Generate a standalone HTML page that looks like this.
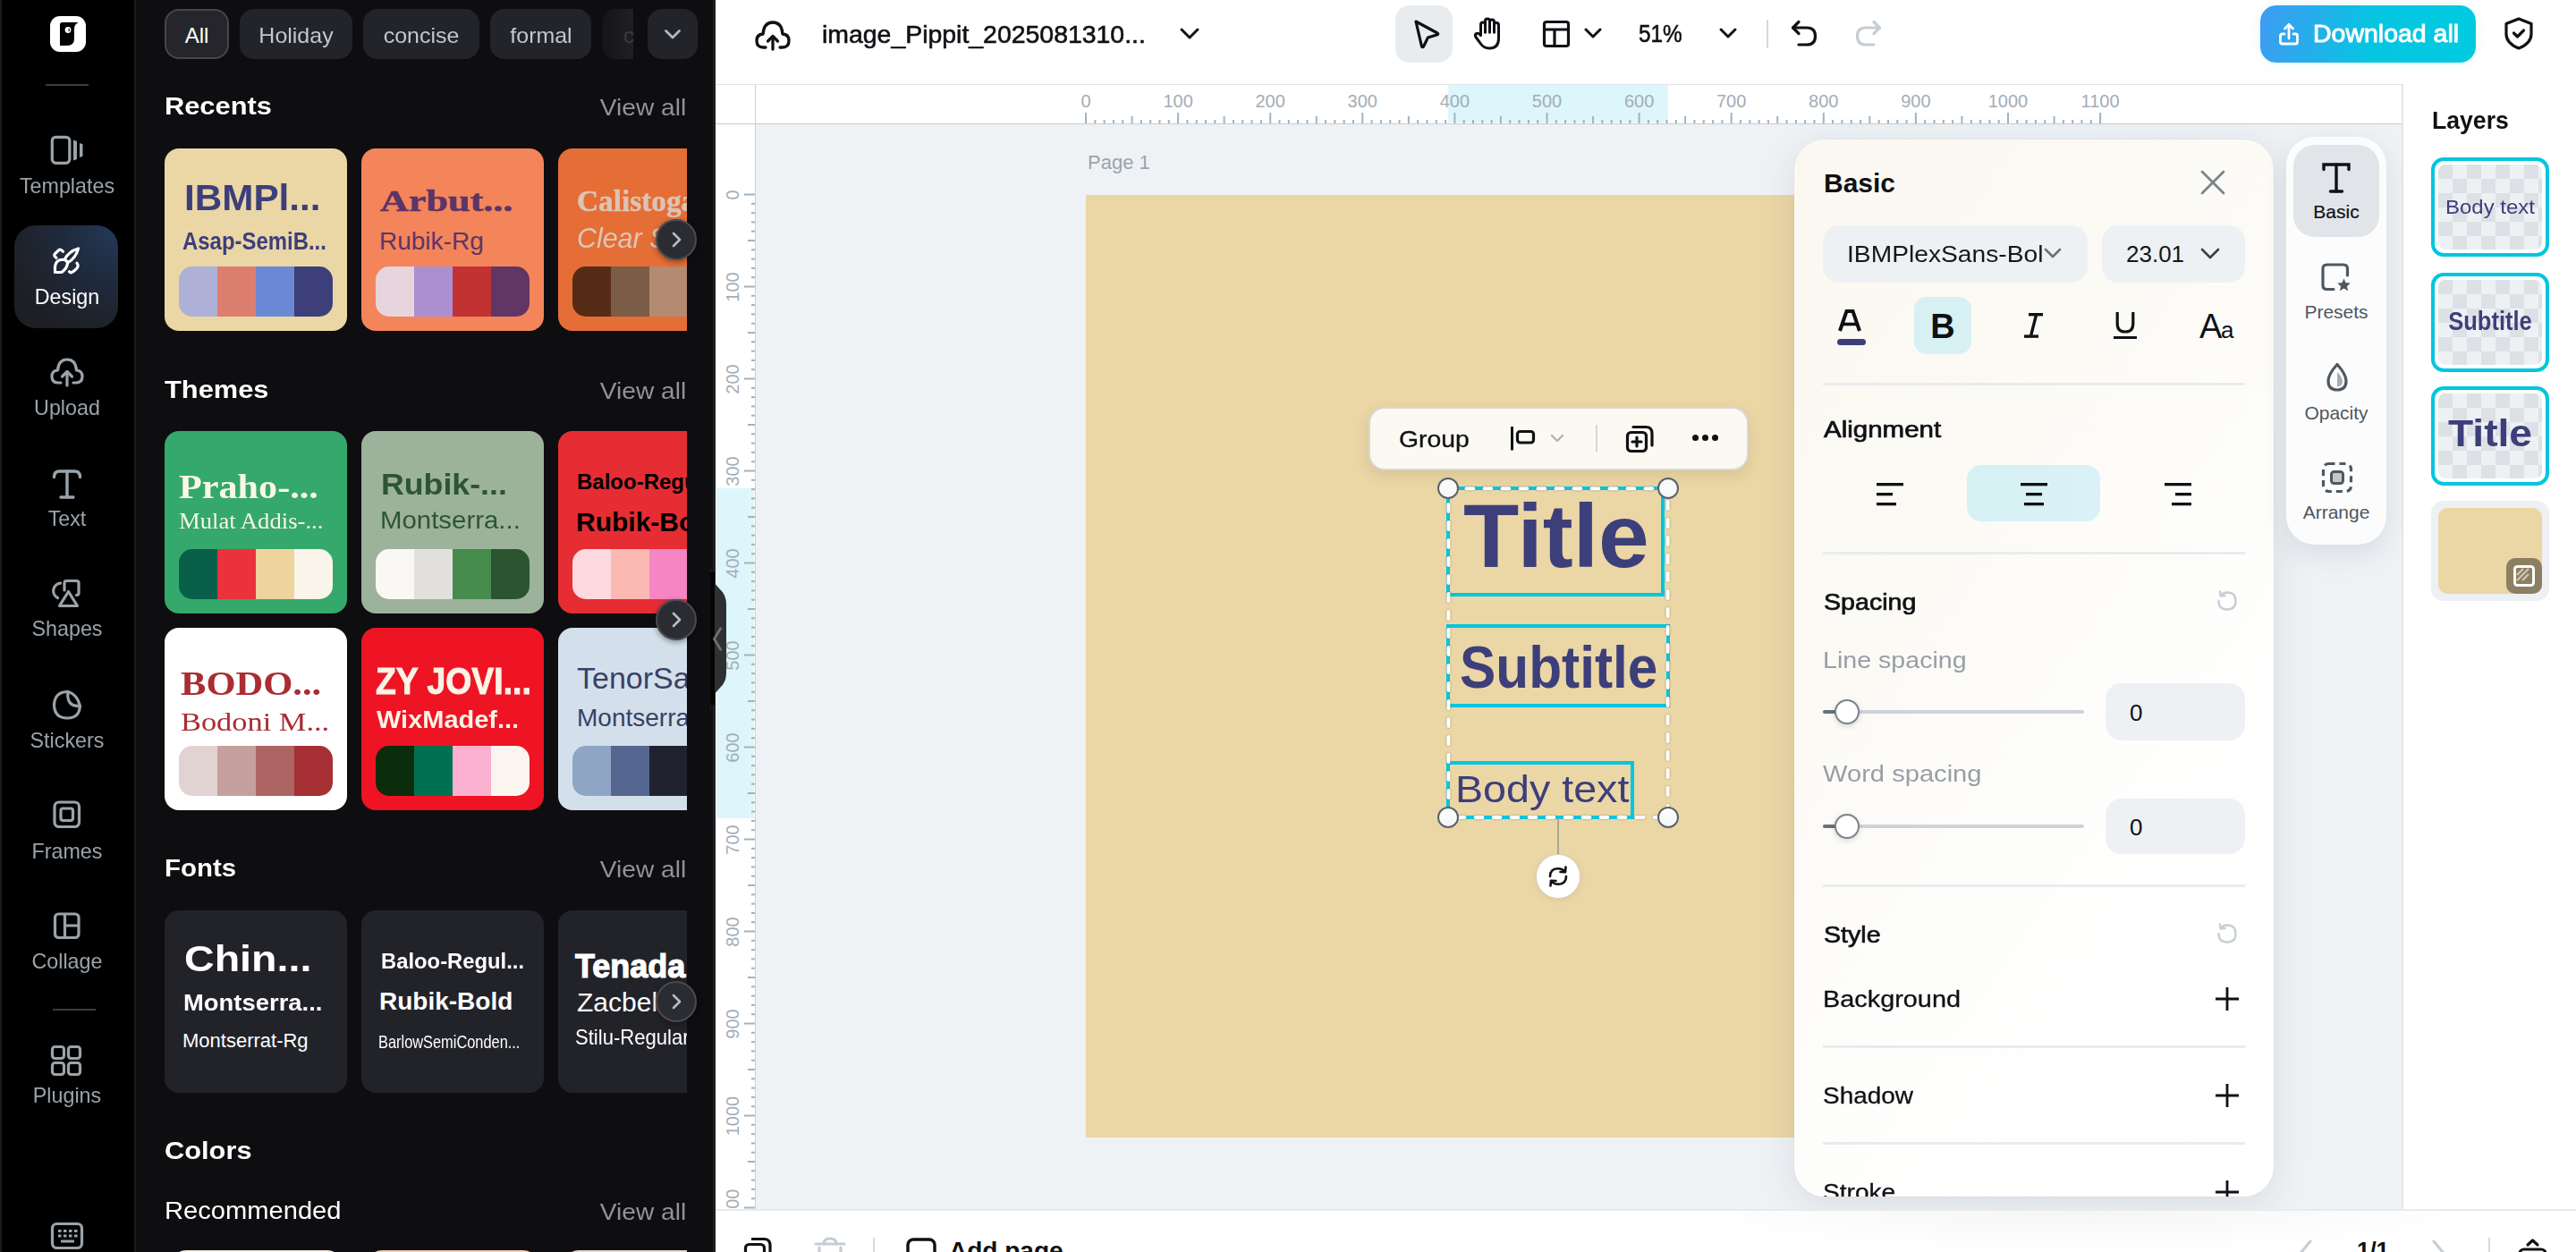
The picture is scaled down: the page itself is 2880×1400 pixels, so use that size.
<!DOCTYPE html>
<html><head><meta charset="utf-8"><style>
html,body{margin:0;padding:0;width:2880px;height:1400px;overflow:hidden;background:#eef2f5;}
body{position:relative;font-family:"Liberation Sans", sans-serif;}
.t{position:absolute;white-space:nowrap;}
.b{position:absolute;box-sizing:border-box;}
svg.b{overflow:visible;}
</style></head><body>
<div class="b" style="left:0px;top:0px;width:150px;height:1400px;background:#000;border-radius:0px;"></div>
<div class="b" style="left:150px;top:0px;width:650px;height:1400px;background:#0e0e11;border-radius:0px;border-left:2px solid #1c1c1f;"></div>
<div class="b" style="left:800px;top:0px;width:2080px;height:95px;background:#fff;border-radius:0px;border-bottom:1px solid #dfe4e8;"></div>
<div class="b" style="left:800px;top:95px;width:1885px;height:44px;background:#fff;border-radius:0px;border-bottom:1px solid #c6ced6;"></div>
<div class="b" style="left:800px;top:95px;width:45px;height:1258px;background:#fff;border-radius:0px;border-right:1px solid #c9d1d9;"></div>
<div class="b" style="left:800px;top:138px;width:45px;height:1px;background:#c6ced6;border-radius:0px;"></div>
<div class="b" style="left:797px;top:0px;width:3px;height:1400px;background:#1f1f21;border-radius:0px;"></div>
<div class="b" style="left:2685px;top:94px;width:195px;height:1259px;background:#fff;border-radius:0px;border-left:2px solid #e3e7ea;"></div>
<div class="b" style="left:800px;top:1352px;width:2080px;height:48px;background:#fff;border-radius:0px;border-top:2px solid #e8ebee;"></div>
<div class="t" style="top:171.38px;font-size:22px;line-height:22px;color:#9aa4ae;font-weight:400;font-family:'Liberation Sans', sans-serif;left:1216px;">Page 1</div>
<div class="b" style="left:1214px;top:218px;width:800px;height:1054px;background:#ebd6a6;border-radius:0px;"></div>
<div class="b" style="left:0px;top:0px;width:2px;height:1400px;background:#1a1a1c;border-radius:0px;"></div>
<div class="b" style="left:56px;top:18px;width:40px;height:40px;background:#fff;border-radius:11px;"></div>
<svg class="b" style="left:56px;top:18px;" width="40" height="40" viewBox="0 0 40 40" fill="none"><path d="M11 9.5 Q11 7 13.5 7 L31.5 7 Q27 9.5 27 14 L27 25 Q27 33 19 33 L11 33 Z" fill="#000"/><circle cx="20" cy="15.5" r="3.4" fill="#fff"/><path d="M20.6 13.6 a2 2 0 0 1 0 3.8 z" fill="#000"/></svg>
<div class="b" style="left:51px;top:94px;width:48px;height:2px;background:#3a3b3e;border-radius:0px;"></div>
<svg class="b" style="left:55px;top:150px;" width="40" height="36" viewBox="0 0 40 36" fill="none"><rect x="3.3" y="3.3" width="19.5" height="29" rx="4" stroke="#9ba3aa" stroke-width="3.2"/><path d="M27 6.5 L31 8 L31 28 L27 29.5 Z" fill="#9ba3aa"/><path d="M34 10 L37.5 11.2 L37.5 24.8 L34 26 Z" fill="#9ba3aa"/></svg>
<div class="t" style="top:195.68px;font-size:24px;line-height:24px;color:#9ba3aa;font-weight:400;font-family:'Liberation Sans', sans-serif;left:-525px;width:1200px;text-align:center;transform:scaleX(0.97);transform-origin:center center;">Templates</div>
<div class="b" style="left:16px;top:252px;width:116px;height:115px;background:radial-gradient(130px 130px at 100% 0%,#24395a 0%,#1f2a3b 50%,#1e1f25 100%);border-radius:24px;"></div>
<svg class="b" style="left:59px;top:276px;" width="30" height="31" viewBox="0 0 30 31" fill="none"><g stroke="#fff" stroke-width="3.2" stroke-linecap="round" stroke-linejoin="round"><path d="M4 12.3 L2 10.3 Q1.2 9.2 2.2 8 L6.5 3.8 Q8 2.6 9.5 3.6 L11.5 5.3"/><path d="M13 14.3 Q18 5 28.5 2 Q26 12.5 16.5 17.8"/><path d="M13 14.5 Q16.5 15.5 16.5 18.5 Q15.8 24 10 28.5 L2.5 28.5 L2.5 22 Q3.5 15 9.5 14.3 Z"/><path d="M27 18.2 Q28.5 20 28 22 Q27 25 21.5 28.5 Q19.7 29.3 18.5 27.8"/></g></svg>
<div class="t" style="top:319.68px;font-size:24px;line-height:24px;color:#fff;font-weight:400;font-family:'Liberation Sans', sans-serif;left:-525px;width:1200px;text-align:center;transform:scaleX(0.97);transform-origin:center center;">Design</div>
<svg class="b" style="left:55px;top:398px;" width="40" height="36" viewBox="0 0 40 36" fill="none"><g stroke="#9ba3aa" stroke-width="3.2" stroke-linecap="round" stroke-linejoin="round"><path d="M13 30 L10 30 Q3 30 3 23 Q3 16.5 9.5 16 Q10.5 4 20 4 Q29.5 4 30.5 16 Q37 16.5 37 23 Q37 30 30 30 L27 30"/><path d="M20 33 L20 18"/><path d="M14.5 23 L20 17.5 L25.5 23"/></g></svg>
<div class="t" style="top:443.68px;font-size:24px;line-height:24px;color:#9ba3aa;font-weight:400;font-family:'Liberation Sans', sans-serif;left:-525px;width:1200px;text-align:center;transform:scaleX(0.97);transform-origin:center center;">Upload</div>
<svg class="b" style="left:55px;top:523px;" width="40" height="36" viewBox="0 0 40 36" fill="none"><g stroke="#9ba3aa" stroke-width="3.4" stroke-linecap="round" fill="none"><path d="M5.5 10.5 Q5.5 4 11.5 4 L28.5 4 Q34.5 4 34.5 10.5"/><path d="M20 4 L20 33"/><path d="M13 33 L27 33"/></g></svg>
<div class="t" style="top:567.68px;font-size:24px;line-height:24px;color:#9ba3aa;font-weight:400;font-family:'Liberation Sans', sans-serif;left:-525px;width:1200px;text-align:center;transform:scaleX(0.97);transform-origin:center center;">Text</div>
<svg class="b" style="left:55px;top:646px;" width="40" height="36" viewBox="0 0 40 36" fill="none"><g stroke="#9ba3aa" stroke-width="3.2" stroke-linejoin="round" stroke-linecap="round"><path d="M12.5 6.2 A8.6 8.6 0 0 0 9.5 22.5"/><path d="M17 14 L17 6 Q17 3.5 19.5 3.5 L30.5 3.5 Q33 3.5 33 6 L33 17 Q33 19.5 30.5 19.5"/><path d="M21.5 15.5 L31.5 31.5 L11.5 31.5 Z"/></g></svg>
<div class="t" style="top:690.68px;font-size:24px;line-height:24px;color:#9ba3aa;font-weight:400;font-family:'Liberation Sans', sans-serif;left:-525px;width:1200px;text-align:center;transform:scaleX(0.97);transform-origin:center center;">Shapes</div>
<svg class="b" style="left:55px;top:770px;" width="40" height="36" viewBox="0 0 40 36" fill="none"><g stroke="#9ba3aa" stroke-width="3.2" stroke-linejoin="round" stroke-linecap="round"><path d="M21 3.5 Q6 3.5 5.5 18.5 Q6 33 20.5 33 Q33.5 33 34.5 19.5 Q25 20 22 14 Q20 9 21 3.5 Z"/><path d="M21 3.5 Q31 6 34.5 19.5"/></g></svg>
<div class="t" style="top:815.68px;font-size:24px;line-height:24px;color:#9ba3aa;font-weight:400;font-family:'Liberation Sans', sans-serif;left:-525px;width:1200px;text-align:center;transform:scaleX(0.97);transform-origin:center center;">Stickers</div>
<svg class="b" style="left:55px;top:894px;" width="40" height="36" viewBox="0 0 40 36" fill="none"><g stroke="#9ba3aa" stroke-width="3.2"><rect x="6" y="3" width="27.5" height="27.5" rx="5"/><rect x="13" y="10" width="13.5" height="13.5" rx="2.5"/></g></svg>
<div class="t" style="top:939.68px;font-size:24px;line-height:24px;color:#9ba3aa;font-weight:400;font-family:'Liberation Sans', sans-serif;left:-525px;width:1200px;text-align:center;transform:scaleX(0.97);transform-origin:center center;">Frames</div>
<svg class="b" style="left:55px;top:1019px;" width="40" height="36" viewBox="0 0 40 36" fill="none"><g stroke="#9ba3aa" stroke-width="3.2"><rect x="6.5" y="3" width="26.5" height="26.5" rx="4"/><path d="M17.5 3 L17.5 29.5 M17.5 16 L33 16"/></g></svg>
<div class="t" style="top:1062.68px;font-size:24px;line-height:24px;color:#9ba3aa;font-weight:400;font-family:'Liberation Sans', sans-serif;left:-525px;width:1200px;text-align:center;transform:scaleX(0.97);transform-origin:center center;">Collage</div>
<div class="b" style="left:59px;top:1128px;width:48px;height:2px;background:#3a3b3e;border-radius:0px;"></div>
<svg class="b" style="left:55px;top:1167px;" width="40" height="38" viewBox="0 0 40 38" fill="none"><g stroke="#9ba3aa" stroke-width="3.2"><rect x="3.5" y="3.5" width="13" height="13" rx="3"/><rect x="21.5" y="3.5" width="13" height="13" rx="3"/><rect x="3.5" y="21.5" width="13" height="13" rx="3"/><rect x="21.5" y="21.5" width="13" height="13" rx="3"/></g></svg>
<div class="t" style="top:1212.68px;font-size:24px;line-height:24px;color:#9ba3aa;font-weight:400;font-family:'Liberation Sans', sans-serif;left:-525px;width:1200px;text-align:center;transform:scaleX(0.97);transform-origin:center center;">Plugins</div>
<svg class="b" style="left:55px;top:1365px;" width="40" height="34" viewBox="0 0 40 34" fill="none"><rect x="3.5" y="3.5" width="33" height="27" rx="5" stroke="#9ba3aa" stroke-width="3.2"/><g fill="#9ba3aa"><rect x="10" y="10" width="3.5" height="3" /><rect x="16" y="10" width="3.5" height="3"/><rect x="22" y="10" width="3.5" height="3"/><rect x="28" y="10" width="3.5" height="3"/><rect x="10" y="15.5" width="3.5" height="3"/><rect x="16" y="15.5" width="3.5" height="3"/><rect x="22" y="15.5" width="3.5" height="3"/><rect x="28" y="15.5" width="3.5" height="3"/><rect x="13" y="21.5" width="15" height="3"/></g></svg>
<div class="b" style="left:184px;top:10px;width:72px;height:56px;background:#25262b;border-radius:16px;border:2px solid #46474c;"></div>
<div class="t" style="top:27.68px;font-size:24px;line-height:24px;color:#fff;font-weight:400;font-family:'Liberation Sans', sans-serif;left:-380px;width:1200px;text-align:center;">All</div>
<div class="b" style="left:268px;top:10px;width:126px;height:56px;background:#232429;border-radius:16px;"></div>
<div class="t" style="top:27.68px;font-size:24px;line-height:24px;color:#c3c6cb;font-weight:400;font-family:'Liberation Sans', sans-serif;left:-269.0px;width:1200px;text-align:center;transform:scaleX(1.04);transform-origin:center center;">Holiday</div>
<div class="b" style="left:406px;top:10px;width:130px;height:56px;background:#232429;border-radius:16px;"></div>
<div class="t" style="top:27.68px;font-size:24px;line-height:24px;color:#c3c6cb;font-weight:400;font-family:'Liberation Sans', sans-serif;left:-129.0px;width:1200px;text-align:center;transform:scaleX(1.04);transform-origin:center center;">concise</div>
<div class="b" style="left:548px;top:10px;width:113px;height:56px;background:#232429;border-radius:16px;"></div>
<div class="t" style="top:27.68px;font-size:24px;line-height:24px;color:#c3c6cb;font-weight:400;font-family:'Liberation Sans', sans-serif;left:4.5px;width:1200px;text-align:center;transform:scaleX(1.04);transform-origin:center center;">formal</div>
<div class="b" style="left:673px;top:10px;width:35px;height:56px;background:linear-gradient(90deg,#151518 0%,#1f2024 100%);border-radius:0px;border-radius:16px 0 0 16px;"></div>
<div class="t" style="top:27.68px;font-size:24px;line-height:24px;color:#3a3b40;font-weight:400;font-family:'Liberation Sans', sans-serif;left:697px;">c</div>
<div class="b" style="left:724px;top:10px;width:56px;height:56px;background:#232429;border-radius:16px;"></div>
<svg class="b" style="left:738px;top:28px;" width="28" height="20" viewBox="0 0 28 20" fill="none"><path d="M6.5 6.5 L14 14 L21.5 6.5" stroke="#b3b6bc" stroke-width="2.8" stroke-linecap="round" stroke-linejoin="round"/></svg>
<div class="t" style="top:105.30px;font-size:28px;line-height:28px;color:#fff;font-weight:700;font-family:'Liberation Sans', sans-serif;left:184px;transform:scaleX(1.1);transform-origin:left center;">Recents</div>
<div class="t" style="top:106.99px;font-size:26px;line-height:26px;color:#909399;font-weight:400;font-family:'Liberation Sans', sans-serif;right:2113px;text-align:right;transform:scaleX(1.08);transform-origin:right center;">View all</div>
<div class="t" style="top:422.30px;font-size:28px;line-height:28px;color:#fff;font-weight:700;font-family:'Liberation Sans', sans-serif;left:184px;transform:scaleX(1.1);transform-origin:left center;">Themes</div>
<div class="t" style="top:423.99px;font-size:26px;line-height:26px;color:#909399;font-weight:400;font-family:'Liberation Sans', sans-serif;right:2113px;text-align:right;transform:scaleX(1.08);transform-origin:right center;">View all</div>
<div class="t" style="top:957.30px;font-size:28px;line-height:28px;color:#fff;font-weight:700;font-family:'Liberation Sans', sans-serif;left:184px;transform:scaleX(1.05);transform-origin:left center;">Fonts</div>
<div class="t" style="top:958.99px;font-size:26px;line-height:26px;color:#909399;font-weight:400;font-family:'Liberation Sans', sans-serif;right:2113px;text-align:right;transform:scaleX(1.08);transform-origin:right center;">View all</div>
<div class="t" style="top:1273.30px;font-size:28px;line-height:28px;color:#fff;font-weight:700;font-family:'Liberation Sans', sans-serif;left:184px;transform:scaleX(1.1);transform-origin:left center;">Colors</div>
<div class="t" style="top:1340.30px;font-size:28px;line-height:28px;color:#fff;font-weight:400;font-family:'Liberation Sans', sans-serif;left:184px;transform:scaleX(1.04);transform-origin:left center;">Recommended</div>
<div class="t" style="top:1341.99px;font-size:26px;line-height:26px;color:#909399;font-weight:400;font-family:'Liberation Sans', sans-serif;right:2113px;text-align:right;transform:scaleX(1.08);transform-origin:right center;">View all</div>
<div class="b" style="left:184px;top:150px;width:584px;height:1250px;overflow:hidden;">
<div class="b" style="left:0px;top:16px;width:204px;height:204px;background:#ebd6a6;border-radius:16px;"></div>
<div class="t" style="top:51.29px;font-size:41px;line-height:41px;color:#3d3f7a;font-weight:700;font-family:'Liberation Sans', sans-serif;left:22px;transform:scaleX(1.03);transform-origin:left center;">IBMPl...</div>
<div class="t" style="top:107.14px;font-size:27px;line-height:27px;color:#3d3f7a;font-weight:700;font-family:'Liberation Sans', sans-serif;left:20px;transform:scaleX(0.886);transform-origin:left center;">Asap-SemiB...</div>
<div class="b" style="left:16px;top:148px;width:172px;height:56px;background:transparent;border-radius:15px;display:flex;overflow:hidden;"><div style="flex:1;background:#aeb0d8"></div><div style="flex:1;background:#dc7f6f"></div><div style="flex:1;background:#6a88d4"></div><div style="flex:1;background:#3d3f7a"></div></div>
<div class="b" style="left:220px;top:16px;width:204px;height:204px;background:#f4845a;border-radius:16px;"></div>
<div class="t" style="top:57.52px;font-size:34px;line-height:34px;color:#5c3567;font-weight:700;font-family:'Liberation Serif', serif;left:241px;transform:scaleX(1.3);transform-origin:left center;-webkit-text-stroke:0.6px #5c3567;">Arbut...</div>
<div class="t" style="top:106.30px;font-size:28px;line-height:28px;color:#5c3567;font-weight:400;font-family:'Liberation Sans', sans-serif;left:240px;">Rubik-Rg</div>
<div class="b" style="left:236px;top:148px;width:172px;height:56px;background:transparent;border-radius:15px;display:flex;overflow:hidden;"><div style="flex:1;background:#e6d5dc"></div><div style="flex:1;background:#ab8fd0"></div><div style="flex:1;background:#c23232"></div><div style="flex:1;background:#613564"></div></div>
<div class="b" style="left:440px;top:16px;width:204px;height:204px;background:#e46e35;border-radius:16px;"></div>
<div class="t" style="top:57.52px;font-size:34px;line-height:34px;color:#dcc3b5;font-weight:700;font-family:'Liberation Serif', serif;left:461px;transform:scaleX(0.98);transform-origin:left center;-webkit-text-stroke:0.5px #dcc3b5;">Calistoga</div>
<div class="t" style="top:99.91px;font-size:32px;line-height:32px;color:#dfc6b8;font-weight:400;font-family:'Liberation Sans', sans-serif;left:461px;transform:scaleX(0.95);transform-origin:left center;font-style:italic;">Clear Sans</div>
<div class="b" style="left:456px;top:148px;width:172px;height:56px;background:transparent;border-radius:15px;display:flex;overflow:hidden;"><div style="flex:1;background:#572c17"></div><div style="flex:1;background:#7b5c47"></div><div style="flex:1;background:#b38b70"></div><div style="flex:1;background:#d9b79a"></div></div>
<div class="b" style="left:0px;top:332px;width:204px;height:204px;background:#35a86b;border-radius:16px;"></div>
<div class="t" style="top:375.18px;font-size:38px;line-height:38px;color:#fbf6e7;font-weight:700;font-family:'Liberation Serif', serif;left:16px;transform:scaleX(1.11);transform-origin:left center;">Praho-...</div>
<div class="t" style="top:420.23px;font-size:26px;line-height:26px;color:#fbf6e7;font-weight:400;font-family:'Liberation Serif', serif;left:16px;transform:scaleX(1.025);transform-origin:left center;">Mulat Addis-...</div>
<div class="b" style="left:16px;top:464px;width:172px;height:56px;background:transparent;border-radius:15px;display:flex;overflow:hidden;"><div style="flex:1;background:#08604b"></div><div style="flex:1;background:#ea313c"></div><div style="flex:1;background:#eed49c"></div><div style="flex:1;background:#f9f5ea"></div></div>
<div class="b" style="left:220px;top:332px;width:204px;height:204px;background:#9cb29a;border-radius:16px;"></div>
<div class="t" style="top:374.22px;font-size:34px;line-height:34px;color:#2d5535;font-weight:700;font-family:'Liberation Sans', sans-serif;left:242px;transform:scaleX(1.05);transform-origin:left center;">Rubik-...</div>
<div class="t" style="top:418.30px;font-size:28px;line-height:28px;color:#2d5535;font-weight:400;font-family:'Liberation Sans', sans-serif;left:241px;transform:scaleX(1.05);transform-origin:left center;">Montserra...</div>
<div class="b" style="left:236px;top:464px;width:172px;height:56px;background:transparent;border-radius:15px;display:flex;overflow:hidden;"><div style="flex:1;background:#faf8f4"></div><div style="flex:1;background:#e2e0dd"></div><div style="flex:1;background:#468c4c"></div><div style="flex:1;background:#2b5430"></div></div>
<div class="b" style="left:440px;top:332px;width:204px;height:204px;background:#e52d33;border-radius:16px;"></div>
<div class="t" style="top:376.68px;font-size:24px;line-height:24px;color:#000;font-weight:700;font-family:'Liberation Sans', sans-serif;left:461px;">Baloo-Regular</div>
<div class="t" style="top:418.61px;font-size:30px;line-height:30px;color:#000;font-weight:700;font-family:'Liberation Sans', sans-serif;left:460px;">Rubik-Bold</div>
<div class="b" style="left:456px;top:464px;width:172px;height:56px;background:transparent;border-radius:15px;display:flex;overflow:hidden;"><div style="flex:1;background:#fcd9de"></div><div style="flex:1;background:#fbb9b4"></div><div style="flex:1;background:#f586c3"></div><div style="flex:1;background:#f5c1d9"></div></div>
<div class="b" style="left:0px;top:552px;width:204px;height:204px;background:#ffffff;border-radius:16px;"></div>
<div class="t" style="top:595.17px;font-size:38px;line-height:38px;color:#a92d33;font-weight:700;font-family:'Liberation Serif', serif;left:18px;transform:scaleX(1.12);transform-origin:left center;">BODO...</div>
<div class="t" style="top:641.88px;font-size:30px;line-height:30px;color:#a92d33;font-weight:400;font-family:'Liberation Serif', serif;left:18px;transform:scaleX(1.146);transform-origin:left center;">Bodoni M...</div>
<div class="b" style="left:16px;top:684px;width:172px;height:56px;background:transparent;border-radius:15px;display:flex;overflow:hidden;"><div style="flex:1;background:#e2d3d3"></div><div style="flex:1;background:#c6a09e"></div><div style="flex:1;background:#ad6564"></div><div style="flex:1;background:#a73034"></div></div>
<div class="b" style="left:220px;top:552px;width:204px;height:204px;background:#ee1424;border-radius:16px;"></div>
<div class="t" style="top:591.45px;font-size:42px;line-height:42px;color:#faf3e6;font-weight:700;font-family:'Liberation Sans', sans-serif;left:236px;transform:scaleX(0.89);transform-origin:left center;-webkit-text-stroke:1px #faf3e6;">ZY JOVI...</div>
<div class="t" style="top:641.30px;font-size:28px;line-height:28px;color:#faf3e6;font-weight:700;font-family:'Liberation Sans', sans-serif;left:237px;transform:scaleX(1.035);transform-origin:left center;">WixMadef...</div>
<div class="b" style="left:236px;top:684px;width:172px;height:56px;background:transparent;border-radius:15px;display:flex;overflow:hidden;"><div style="flex:1;background:#0c2d0c"></div><div style="flex:1;background:#007150"></div><div style="flex:1;background:#fcb0cf"></div><div style="flex:1;background:#faf6ef"></div></div>
<div class="b" style="left:440px;top:552px;width:204px;height:204px;background:#d3e0eb;border-radius:16px;"></div>
<div class="t" style="top:591.22px;font-size:34px;line-height:34px;color:#3a3f66;font-weight:400;font-family:'Liberation Sans', sans-serif;left:461px;">TenorSans</div>
<div class="t" style="top:639.30px;font-size:28px;line-height:28px;color:#3a3f66;font-weight:400;font-family:'Liberation Sans', sans-serif;left:461px;">Montserrat</div>
<div class="b" style="left:456px;top:684px;width:172px;height:56px;background:transparent;border-radius:15px;display:flex;overflow:hidden;"><div style="flex:1;background:#8ea5c6"></div><div style="flex:1;background:#556690"></div><div style="flex:1;background:#20222f"></div><div style="flex:1;background:#20222f"></div></div>
<div class="b" style="left:0px;top:868px;width:204px;height:204px;background:#222329;border-radius:16px;"></div>
<div class="t" style="top:902.14px;font-size:40px;line-height:40px;color:#fff;font-weight:700;font-family:'Liberation Sans', sans-serif;left:22px;transform:scaleX(1.165);transform-origin:left center;">Chin...</div>
<div class="t" style="top:957.99px;font-size:26px;line-height:26px;color:#fff;font-weight:700;font-family:'Liberation Sans', sans-serif;left:21px;transform:scaleX(1.055);transform-origin:left center;">Montserra...</div>
<div class="t" style="top:1003.38px;font-size:22px;line-height:22px;color:#fff;font-weight:400;font-family:'Liberation Sans', sans-serif;left:20px;">Montserrat-Rg</div>
<div class="b" style="left:220px;top:868px;width:204px;height:204px;background:#222329;border-radius:16px;"></div>
<div class="t" style="top:913.53px;font-size:23px;line-height:23px;color:#fff;font-weight:700;font-family:'Liberation Sans', sans-serif;left:242px;transform:scaleX(1.035);transform-origin:left center;">Baloo-Regul...</div>
<div class="t" style="top:956.30px;font-size:28px;line-height:28px;color:#fff;font-weight:700;font-family:'Liberation Sans', sans-serif;left:240px;">Rubik-Bold</div>
<div class="t" style="top:1004.22px;font-size:21px;line-height:21px;color:#fff;font-weight:400;font-family:'Liberation Sans', sans-serif;left:239px;transform:scaleX(0.78);transform-origin:left center;">BarlowSemiConden...</div>
<div class="b" style="left:440px;top:868px;width:204px;height:204px;background:#222329;border-radius:16px;"></div>
<div class="t" style="top:912.53px;font-size:36px;line-height:36px;color:#fff;font-weight:700;font-family:'Liberation Sans', sans-serif;left:459px;transform:scaleX(1.0);transform-origin:left center;-webkit-text-stroke:1.2px #fff;">Tenada</div>
<div class="t" style="top:955.61px;font-size:30px;line-height:30px;color:#fff;font-weight:400;font-family:'Liberation Sans', sans-serif;left:461px;">Zacbel</div>
<div class="t" style="top:997.68px;font-size:24px;line-height:24px;color:#fff;font-weight:400;font-family:'Liberation Sans', sans-serif;left:459px;transform:scaleX(0.92);transform-origin:left center;">Stilu-Regular</div>
<div class="b" style="left:8px;top:1248px;width:190px;height:100px;background:#f9eee3;border-radius:16px;"></div>
<div class="b" style="left:227px;top:1248px;width:190px;height:100px;background:#f2cfae;border-radius:16px;"></div>
<div class="b" style="left:447px;top:1248px;width:190px;height:100px;background:#e8d6d6;border-radius:16px;"></div>
</div>
<div class="b" style="left:733px;top:245px;width:46px;height:46px;background:#2b2c31;border-radius:23px;border:2px solid #4a4b50;box-shadow:0 2px 6px rgba(0,0,0,.4);"></div>
<svg class="b" style="left:747px;top:257px;" width="18" height="22" viewBox="0 0 18 22" fill="none"><path d="M6 4 L13 11 L6 18" stroke="#b8bbc1" stroke-width="2.6" stroke-linecap="round" stroke-linejoin="round"/></svg>
<div class="b" style="left:733px;top:670px;width:46px;height:46px;background:#2b2c31;border-radius:23px;border:2px solid #4a4b50;box-shadow:0 2px 6px rgba(0,0,0,.4);"></div>
<svg class="b" style="left:747px;top:682px;" width="18" height="22" viewBox="0 0 18 22" fill="none"><path d="M6 4 L13 11 L6 18" stroke="#b8bbc1" stroke-width="2.6" stroke-linecap="round" stroke-linejoin="round"/></svg>
<div class="b" style="left:733px;top:1097px;width:46px;height:46px;background:#2b2c31;border-radius:23px;border:2px solid #4a4b50;box-shadow:0 2px 6px rgba(0,0,0,.4);"></div>
<svg class="b" style="left:747px;top:1109px;" width="18" height="22" viewBox="0 0 18 22" fill="none"><path d="M6 4 L13 11 L6 18" stroke="#b8bbc1" stroke-width="2.6" stroke-linecap="round" stroke-linejoin="round"/></svg>
<svg class="b" style="left:843px;top:20px;" width="42" height="36" viewBox="0 0 42 36" fill="none"><g stroke="#0f1115" stroke-width="3.3" stroke-linecap="round" stroke-linejoin="round"><path d="M13 33 L10.5 33 Q3 33 3 25.5 Q3 18.5 10 18 Q11 5 21 5 Q31 5 32 18 Q39 18.5 39 25.5 Q39 33 31.5 33 L29 33"/><path d="M21 35 L21 21"/><path d="M15.5 26 L21 20.5 L26.5 26"/></g></svg>
<div class="t" style="top:25.30px;font-size:28px;line-height:28px;color:#0f1115;font-weight:400;font-family:'Liberation Sans', sans-serif;left:919px;transform:scaleX(1.015);transform-origin:left center;-webkit-text-stroke:0.6px #0f1115;">image_Pippit_2025081310...</div>
<svg class="b" style="left:1316px;top:28px;" width="28" height="20" viewBox="0 0 28 20" fill="none"><path d="M5 5 L14 14 L23 5" stroke="#0f1115" stroke-width="3" stroke-linecap="round" stroke-linejoin="round"/></svg>
<div class="b" style="left:1560px;top:6px;width:64px;height:64px;background:#e9ecef;border-radius:16px;"></div>
<svg class="b" style="left:1578px;top:20px;" width="34" height="36" viewBox="0 0 34 36" fill="none"><path d="M5 4 L29 17 Q30.5 18 29 18.8 L18.5 22 L13.5 32 Q12.5 33.5 11.5 32 Z" stroke="#0f1115" stroke-width="3.2" stroke-linejoin="round"/></svg>
<svg class="b" style="left:1646px;top:18px;" width="36" height="40" viewBox="0 0 36 40" fill="none"><g stroke="#0f1115" stroke-width="3" stroke-linecap="round" stroke-linejoin="round"><path d="M9.5 21 L9.5 9.5 Q9.5 7 12 7 Q14.5 7 14.5 9.5 L14.5 18"/><path d="M14.5 18 L14.5 5.5 Q14.5 3 17 3 Q19.5 3 19.5 5.5 L19.5 18"/><path d="M19.5 18 L19.5 6.5 Q19.5 4 22 4 Q24.5 4 24.5 6.5 L24.5 18"/><path d="M24.5 18 L24.5 10 Q24.5 7.5 27 7.5 Q29.5 7.5 29.5 10 L29.5 25 Q29.5 36 19 36 Q13 36 9.5 31 L4 23.5 Q2.5 21 4.5 19.5 Q6.5 18.5 8.5 20.5 L9.5 21.5"/></g></svg>
<svg class="b" style="left:1722px;top:20px;" width="36" height="36" viewBox="0 0 36 36" fill="none"><g stroke="#0f1115" stroke-width="3.2"><rect x="4.5" y="4.5" width="27" height="27" rx="2.5"/><path d="M4.5 13 L31.5 13 M16 13 L16 31.5"/></g></svg>
<svg class="b" style="left:1768px;top:28px;" width="26" height="20" viewBox="0 0 26 20" fill="none"><path d="M5 5 L13 13 L21 5" stroke="#0f1115" stroke-width="3" stroke-linecap="round" stroke-linejoin="round"/></svg>
<div class="t" style="top:24.30px;font-size:28px;line-height:28px;color:#0f1115;font-weight:400;font-family:'Liberation Sans', sans-serif;left:1832px;transform:scaleX(0.87);transform-origin:left center;-webkit-text-stroke:0.6px #0f1115;">51%</div>
<svg class="b" style="left:1919px;top:28px;" width="26" height="20" viewBox="0 0 26 20" fill="none"><path d="M5 5 L13 13 L21 5" stroke="#0f1115" stroke-width="3" stroke-linecap="round" stroke-linejoin="round"/></svg>
<div class="b" style="left:1975px;top:22px;width:2px;height:32px;background:#d5d9dd;border-radius:0px;"></div>
<svg class="b" style="left:2000px;top:20px;" width="34" height="36" viewBox="0 0 34 36" fill="none"><g stroke="#0f1115" stroke-width="3.2" stroke-linecap="round" stroke-linejoin="round"><path d="M11 4.5 L4.5 11 L11 17.5"/><path d="M4.5 11 L20 11 Q29.5 11 29.5 20.5 Q29.5 30 20 30 L11 30"/></g></svg>
<svg class="b" style="left:2072px;top:20px;" width="34" height="36" viewBox="0 0 34 36" fill="none"><g stroke="#c6cdd4" stroke-width="3.2" stroke-linecap="round" stroke-linejoin="round"><path d="M23 4.5 L29.5 11 L23 17.5"/><path d="M29.5 11 L14 11 Q4.5 11 4.5 20.5 Q4.5 30 14 30 L23 30"/></g></svg>
<div class="b" style="left:2527px;top:6px;width:241px;height:64px;background:linear-gradient(100deg,#3f9cf2 0%,#22b0ea 28%,#06c5e1 52%,#00cbe0 100%);border-radius:18px;box-shadow:0 0 14px rgba(0,190,230,0.10);"></div>
<svg class="b" style="left:2546px;top:24px;" width="26" height="28" viewBox="0 0 26 28" fill="none"><g stroke="#fff" stroke-width="2.8" stroke-linecap="round" stroke-linejoin="round" fill="none"><path d="M8 14 L5.5 14 Q3.5 14 3.5 16 L3.5 23 Q3.5 25 5.5 25 L20.5 25 Q22.5 25 22.5 23 L22.5 16 Q22.5 14 20.5 14 L18 14"/><path d="M13 19 L13 3.5"/><path d="M8.5 8 L13 3.5 L17.5 8"/></g></svg>
<div class="t" style="top:25.14px;font-size:27px;line-height:27px;color:#fff;font-weight:400;font-family:'Liberation Sans', sans-serif;left:2586px;transform:scaleX(1.055);transform-origin:left center;-webkit-text-stroke:0.9px #fff;">Download all</div>
<svg class="b" style="left:2797px;top:18px;" width="38" height="40" viewBox="0 0 38 40" fill="none"><g stroke="#0f1115" stroke-width="3.2" stroke-linejoin="round" stroke-linecap="round" fill="none"><path d="M19 3 L33 8.5 L33 20 Q33 30.5 19 36 Q5 30.5 5 20 L5 8.5 Z"/><path d="M13.5 19 L17.5 23 L24.5 16"/></g></svg>
<div class="b" style="left:1619px;top:95px;width:246px;height:42px;background:#ddf6fb;border-radius:0px;"></div>
<div class="b" style="left:801px;top:546px;width:42px;height:369px;background:#ddf6fb;border-radius:0px;"></div>
<svg class="b" style="left:0;top:0" width="2880" height="140"><g fill="#a7b1bb"><rect x="1213.00" y="126" width="2" height="12"/><rect x="1223.31" y="134" width="2" height="4"/><rect x="1233.62" y="134" width="2" height="4"/><rect x="1243.93" y="134" width="2" height="4"/><rect x="1254.24" y="134" width="2" height="4"/><rect x="1264.55" y="130" width="2" height="8"/><rect x="1274.86" y="134" width="2" height="4"/><rect x="1285.17" y="134" width="2" height="4"/><rect x="1295.48" y="134" width="2" height="4"/><rect x="1305.79" y="134" width="2" height="4"/><rect x="1316.10" y="126" width="2" height="12"/><rect x="1326.41" y="134" width="2" height="4"/><rect x="1336.72" y="134" width="2" height="4"/><rect x="1347.03" y="134" width="2" height="4"/><rect x="1357.34" y="134" width="2" height="4"/><rect x="1367.65" y="130" width="2" height="8"/><rect x="1377.96" y="134" width="2" height="4"/><rect x="1388.27" y="134" width="2" height="4"/><rect x="1398.58" y="134" width="2" height="4"/><rect x="1408.89" y="134" width="2" height="4"/><rect x="1419.20" y="126" width="2" height="12"/><rect x="1429.51" y="134" width="2" height="4"/><rect x="1439.82" y="134" width="2" height="4"/><rect x="1450.13" y="134" width="2" height="4"/><rect x="1460.44" y="134" width="2" height="4"/><rect x="1470.75" y="130" width="2" height="8"/><rect x="1481.06" y="134" width="2" height="4"/><rect x="1491.37" y="134" width="2" height="4"/><rect x="1501.68" y="134" width="2" height="4"/><rect x="1511.99" y="134" width="2" height="4"/><rect x="1522.30" y="126" width="2" height="12"/><rect x="1532.61" y="134" width="2" height="4"/><rect x="1542.92" y="134" width="2" height="4"/><rect x="1553.23" y="134" width="2" height="4"/><rect x="1563.54" y="134" width="2" height="4"/><rect x="1573.85" y="130" width="2" height="8"/><rect x="1584.16" y="134" width="2" height="4"/><rect x="1594.47" y="134" width="2" height="4"/><rect x="1604.78" y="134" width="2" height="4"/><rect x="1615.09" y="134" width="2" height="4"/><rect x="1625.40" y="126" width="2" height="12"/><rect x="1635.71" y="134" width="2" height="4"/><rect x="1646.02" y="134" width="2" height="4"/><rect x="1656.33" y="134" width="2" height="4"/><rect x="1666.64" y="134" width="2" height="4"/><rect x="1676.95" y="130" width="2" height="8"/><rect x="1687.26" y="134" width="2" height="4"/><rect x="1697.57" y="134" width="2" height="4"/><rect x="1707.88" y="134" width="2" height="4"/><rect x="1718.19" y="134" width="2" height="4"/><rect x="1728.50" y="126" width="2" height="12"/><rect x="1738.81" y="134" width="2" height="4"/><rect x="1749.12" y="134" width="2" height="4"/><rect x="1759.43" y="134" width="2" height="4"/><rect x="1769.74" y="134" width="2" height="4"/><rect x="1780.05" y="130" width="2" height="8"/><rect x="1790.36" y="134" width="2" height="4"/><rect x="1800.67" y="134" width="2" height="4"/><rect x="1810.98" y="134" width="2" height="4"/><rect x="1821.29" y="134" width="2" height="4"/><rect x="1831.60" y="126" width="2" height="12"/><rect x="1841.91" y="134" width="2" height="4"/><rect x="1852.22" y="134" width="2" height="4"/><rect x="1862.53" y="134" width="2" height="4"/><rect x="1872.84" y="134" width="2" height="4"/><rect x="1883.15" y="130" width="2" height="8"/><rect x="1893.46" y="134" width="2" height="4"/><rect x="1903.77" y="134" width="2" height="4"/><rect x="1914.08" y="134" width="2" height="4"/><rect x="1924.39" y="134" width="2" height="4"/><rect x="1934.70" y="126" width="2" height="12"/><rect x="1945.01" y="134" width="2" height="4"/><rect x="1955.32" y="134" width="2" height="4"/><rect x="1965.63" y="134" width="2" height="4"/><rect x="1975.94" y="134" width="2" height="4"/><rect x="1986.25" y="130" width="2" height="8"/><rect x="1996.56" y="134" width="2" height="4"/><rect x="2006.87" y="134" width="2" height="4"/><rect x="2017.18" y="134" width="2" height="4"/><rect x="2027.49" y="134" width="2" height="4"/><rect x="2037.80" y="126" width="2" height="12"/><rect x="2048.11" y="134" width="2" height="4"/><rect x="2058.42" y="134" width="2" height="4"/><rect x="2068.73" y="134" width="2" height="4"/><rect x="2079.04" y="134" width="2" height="4"/><rect x="2089.35" y="130" width="2" height="8"/><rect x="2099.66" y="134" width="2" height="4"/><rect x="2109.97" y="134" width="2" height="4"/><rect x="2120.28" y="134" width="2" height="4"/><rect x="2130.59" y="134" width="2" height="4"/><rect x="2140.90" y="126" width="2" height="12"/><rect x="2151.21" y="134" width="2" height="4"/><rect x="2161.52" y="134" width="2" height="4"/><rect x="2171.83" y="134" width="2" height="4"/><rect x="2182.14" y="134" width="2" height="4"/><rect x="2192.45" y="130" width="2" height="8"/><rect x="2202.76" y="134" width="2" height="4"/><rect x="2213.07" y="134" width="2" height="4"/><rect x="2223.38" y="134" width="2" height="4"/><rect x="2233.69" y="134" width="2" height="4"/><rect x="2244.00" y="126" width="2" height="12"/><rect x="2254.31" y="134" width="2" height="4"/><rect x="2264.62" y="134" width="2" height="4"/><rect x="2274.93" y="134" width="2" height="4"/><rect x="2285.24" y="134" width="2" height="4"/><rect x="2295.55" y="130" width="2" height="8"/><rect x="2305.86" y="134" width="2" height="4"/><rect x="2316.17" y="134" width="2" height="4"/><rect x="2326.48" y="134" width="2" height="4"/><rect x="2336.79" y="134" width="2" height="4"/><rect x="2347.10" y="126" width="2" height="12"/></g></svg>
<div class="t" style="top:103.07px;font-size:20px;line-height:20px;color:#a3adb7;font-weight:400;font-family:'Liberation Sans', sans-serif;left:614.0px;width:1200px;text-align:center;">0</div>
<div class="t" style="top:103.07px;font-size:20px;line-height:20px;color:#a3adb7;font-weight:400;font-family:'Liberation Sans', sans-serif;left:717.0999999999999px;width:1200px;text-align:center;">100</div>
<div class="t" style="top:103.07px;font-size:20px;line-height:20px;color:#a3adb7;font-weight:400;font-family:'Liberation Sans', sans-serif;left:820.2px;width:1200px;text-align:center;">200</div>
<div class="t" style="top:103.07px;font-size:20px;line-height:20px;color:#a3adb7;font-weight:400;font-family:'Liberation Sans', sans-serif;left:923.3px;width:1200px;text-align:center;">300</div>
<div class="t" style="top:103.07px;font-size:20px;line-height:20px;color:#a3adb7;font-weight:400;font-family:'Liberation Sans', sans-serif;left:1026.4px;width:1200px;text-align:center;">400</div>
<div class="t" style="top:103.07px;font-size:20px;line-height:20px;color:#a3adb7;font-weight:400;font-family:'Liberation Sans', sans-serif;left:1129.5px;width:1200px;text-align:center;">500</div>
<div class="t" style="top:103.07px;font-size:20px;line-height:20px;color:#a3adb7;font-weight:400;font-family:'Liberation Sans', sans-serif;left:1232.6px;width:1200px;text-align:center;">600</div>
<div class="t" style="top:103.07px;font-size:20px;line-height:20px;color:#a3adb7;font-weight:400;font-family:'Liberation Sans', sans-serif;left:1335.6999999999998px;width:1200px;text-align:center;">700</div>
<div class="t" style="top:103.07px;font-size:20px;line-height:20px;color:#a3adb7;font-weight:400;font-family:'Liberation Sans', sans-serif;left:1438.8px;width:1200px;text-align:center;">800</div>
<div class="t" style="top:103.07px;font-size:20px;line-height:20px;color:#a3adb7;font-weight:400;font-family:'Liberation Sans', sans-serif;left:1541.9px;width:1200px;text-align:center;">900</div>
<div class="t" style="top:103.07px;font-size:20px;line-height:20px;color:#a3adb7;font-weight:400;font-family:'Liberation Sans', sans-serif;left:1645.0px;width:1200px;text-align:center;">1000</div>
<div class="t" style="top:103.07px;font-size:20px;line-height:20px;color:#a3adb7;font-weight:400;font-family:'Liberation Sans', sans-serif;left:1748.1px;width:1200px;text-align:center;">1100</div>
<svg class="b" style="left:0;top:0" width="860" height="1400"><g fill="#a7b1bb"><rect x="832" y="216.50" width="12" height="2"/><rect x="840" y="226.80" width="4" height="2"/><rect x="840" y="237.10" width="4" height="2"/><rect x="840" y="247.40" width="4" height="2"/><rect x="840" y="257.70" width="4" height="2"/><rect x="836" y="268.00" width="8" height="2"/><rect x="840" y="278.30" width="4" height="2"/><rect x="840" y="288.60" width="4" height="2"/><rect x="840" y="298.90" width="4" height="2"/><rect x="840" y="309.20" width="4" height="2"/><rect x="832" y="319.50" width="12" height="2"/><rect x="840" y="329.80" width="4" height="2"/><rect x="840" y="340.10" width="4" height="2"/><rect x="840" y="350.40" width="4" height="2"/><rect x="840" y="360.70" width="4" height="2"/><rect x="836" y="371.00" width="8" height="2"/><rect x="840" y="381.30" width="4" height="2"/><rect x="840" y="391.60" width="4" height="2"/><rect x="840" y="401.90" width="4" height="2"/><rect x="840" y="412.20" width="4" height="2"/><rect x="832" y="422.50" width="12" height="2"/><rect x="840" y="432.80" width="4" height="2"/><rect x="840" y="443.10" width="4" height="2"/><rect x="840" y="453.40" width="4" height="2"/><rect x="840" y="463.70" width="4" height="2"/><rect x="836" y="474.00" width="8" height="2"/><rect x="840" y="484.30" width="4" height="2"/><rect x="840" y="494.60" width="4" height="2"/><rect x="840" y="504.90" width="4" height="2"/><rect x="840" y="515.20" width="4" height="2"/><rect x="832" y="525.50" width="12" height="2"/><rect x="840" y="535.80" width="4" height="2"/><rect x="840" y="546.10" width="4" height="2"/><rect x="840" y="556.40" width="4" height="2"/><rect x="840" y="566.70" width="4" height="2"/><rect x="836" y="577.00" width="8" height="2"/><rect x="840" y="587.30" width="4" height="2"/><rect x="840" y="597.60" width="4" height="2"/><rect x="840" y="607.90" width="4" height="2"/><rect x="840" y="618.20" width="4" height="2"/><rect x="832" y="628.50" width="12" height="2"/><rect x="840" y="638.80" width="4" height="2"/><rect x="840" y="649.10" width="4" height="2"/><rect x="840" y="659.40" width="4" height="2"/><rect x="840" y="669.70" width="4" height="2"/><rect x="836" y="680.00" width="8" height="2"/><rect x="840" y="690.30" width="4" height="2"/><rect x="840" y="700.60" width="4" height="2"/><rect x="840" y="710.90" width="4" height="2"/><rect x="840" y="721.20" width="4" height="2"/><rect x="832" y="731.50" width="12" height="2"/><rect x="840" y="741.80" width="4" height="2"/><rect x="840" y="752.10" width="4" height="2"/><rect x="840" y="762.40" width="4" height="2"/><rect x="840" y="772.70" width="4" height="2"/><rect x="836" y="783.00" width="8" height="2"/><rect x="840" y="793.30" width="4" height="2"/><rect x="840" y="803.60" width="4" height="2"/><rect x="840" y="813.90" width="4" height="2"/><rect x="840" y="824.20" width="4" height="2"/><rect x="832" y="834.50" width="12" height="2"/><rect x="840" y="844.80" width="4" height="2"/><rect x="840" y="855.10" width="4" height="2"/><rect x="840" y="865.40" width="4" height="2"/><rect x="840" y="875.70" width="4" height="2"/><rect x="836" y="886.00" width="8" height="2"/><rect x="840" y="896.30" width="4" height="2"/><rect x="840" y="906.60" width="4" height="2"/><rect x="840" y="916.90" width="4" height="2"/><rect x="840" y="927.20" width="4" height="2"/><rect x="832" y="937.50" width="12" height="2"/><rect x="840" y="947.80" width="4" height="2"/><rect x="840" y="958.10" width="4" height="2"/><rect x="840" y="968.40" width="4" height="2"/><rect x="840" y="978.70" width="4" height="2"/><rect x="836" y="989.00" width="8" height="2"/><rect x="840" y="999.30" width="4" height="2"/><rect x="840" y="1009.60" width="4" height="2"/><rect x="840" y="1019.90" width="4" height="2"/><rect x="840" y="1030.20" width="4" height="2"/><rect x="832" y="1040.50" width="12" height="2"/><rect x="840" y="1050.80" width="4" height="2"/><rect x="840" y="1061.10" width="4" height="2"/><rect x="840" y="1071.40" width="4" height="2"/><rect x="840" y="1081.70" width="4" height="2"/><rect x="836" y="1092.00" width="8" height="2"/><rect x="840" y="1102.30" width="4" height="2"/><rect x="840" y="1112.60" width="4" height="2"/><rect x="840" y="1122.90" width="4" height="2"/><rect x="840" y="1133.20" width="4" height="2"/><rect x="832" y="1143.50" width="12" height="2"/><rect x="840" y="1153.80" width="4" height="2"/><rect x="840" y="1164.10" width="4" height="2"/><rect x="840" y="1174.40" width="4" height="2"/><rect x="840" y="1184.70" width="4" height="2"/><rect x="836" y="1195.00" width="8" height="2"/><rect x="840" y="1205.30" width="4" height="2"/><rect x="840" y="1215.60" width="4" height="2"/><rect x="840" y="1225.90" width="4" height="2"/><rect x="840" y="1236.20" width="4" height="2"/><rect x="832" y="1246.50" width="12" height="2"/><rect x="840" y="1256.80" width="4" height="2"/><rect x="840" y="1267.10" width="4" height="2"/><rect x="840" y="1277.40" width="4" height="2"/><rect x="840" y="1287.70" width="4" height="2"/><rect x="836" y="1298.00" width="8" height="2"/><rect x="840" y="1308.30" width="4" height="2"/><rect x="840" y="1318.60" width="4" height="2"/><rect x="840" y="1328.90" width="4" height="2"/><rect x="840" y="1339.20" width="4" height="2"/><rect x="832" y="1349.50" width="12" height="2"/></g></svg>
<div class="t" style="left:719px;top:207.5px;width:200px;height:20px;line-height:20px;text-align:center;font-size:20px;color:#a3adb7;transform:rotate(-90deg);">0</div>
<div class="t" style="left:719px;top:310.5px;width:200px;height:20px;line-height:20px;text-align:center;font-size:20px;color:#a3adb7;transform:rotate(-90deg);">100</div>
<div class="t" style="left:719px;top:413.5px;width:200px;height:20px;line-height:20px;text-align:center;font-size:20px;color:#a3adb7;transform:rotate(-90deg);">200</div>
<div class="t" style="left:719px;top:516.5px;width:200px;height:20px;line-height:20px;text-align:center;font-size:20px;color:#a3adb7;transform:rotate(-90deg);">300</div>
<div class="t" style="left:719px;top:619.5px;width:200px;height:20px;line-height:20px;text-align:center;font-size:20px;color:#a3adb7;transform:rotate(-90deg);">400</div>
<div class="t" style="left:719px;top:722.5px;width:200px;height:20px;line-height:20px;text-align:center;font-size:20px;color:#a3adb7;transform:rotate(-90deg);">500</div>
<div class="t" style="left:719px;top:825.5px;width:200px;height:20px;line-height:20px;text-align:center;font-size:20px;color:#a3adb7;transform:rotate(-90deg);">600</div>
<div class="t" style="left:719px;top:928.5px;width:200px;height:20px;line-height:20px;text-align:center;font-size:20px;color:#a3adb7;transform:rotate(-90deg);">700</div>
<div class="t" style="left:719px;top:1031.5px;width:200px;height:20px;line-height:20px;text-align:center;font-size:20px;color:#a3adb7;transform:rotate(-90deg);">800</div>
<div class="t" style="left:719px;top:1134.5px;width:200px;height:20px;line-height:20px;text-align:center;font-size:20px;color:#a3adb7;transform:rotate(-90deg);">900</div>
<div class="t" style="left:719px;top:1237.5px;width:200px;height:20px;line-height:20px;text-align:center;font-size:20px;color:#a3adb7;transform:rotate(-90deg);">1000</div>
<div class="t" style="left:719px;top:1340.5px;width:200px;height:20px;line-height:20px;text-align:center;font-size:20px;color:#a3adb7;transform:rotate(-90deg);">1100</div>
<svg class="b" style="left:0;top:0" width="860" height="1400"><path d="M794 632 Q795 650 805 659 Q812 665 812 676 L812 752 Q812 763 805 769 Q795 778 794 796 Z" fill="#2d3132"/><rect x="794" y="640" width="5" height="148" fill="#050505"/><path d="M805.5 703 L798.5 714.5 L805.5 726" stroke="#6d7072" stroke-width="2.8" fill="none" stroke-linecap="square"/></svg>
<div class="t" style="top:549.35px;font-size:100px;line-height:100px;color:#3d3f7a;font-weight:700;font-family:'Liberation Sans', sans-serif;left:1636px;transform:scaleX(1.02);transform-origin:left center;">Title</div>
<div class="t" style="top:713.13px;font-size:66px;line-height:66px;color:#3d3f7a;font-weight:700;font-family:'Liberation Sans', sans-serif;left:1632px;transform:scaleX(0.915);transform-origin:left center;">Subtitle</div>
<div class="t" style="top:862.45px;font-size:42px;line-height:42px;color:#3d3f7a;font-weight:400;font-family:'Liberation Sans', sans-serif;left:1627px;transform:scaleX(1.11);transform-origin:left center;">Body text</div>
<div class="b" style="left:1617.4px;top:544.3px;width:243.2px;height:122.6px;background:transparent;border-radius:0px;border:4px solid #00c6de;"></div>
<div class="b" style="left:1617.4px;top:698.4px;width:249.2px;height:92.6px;background:transparent;border-radius:0px;border:4px solid #00c6de;"></div>
<div class="b" style="left:1617.4px;top:850.7px;width:209.9px;height:65.3px;background:transparent;border-radius:0px;border:4px solid #00c6de;"></div>
<svg class="b" style="left:0;top:0" width="2880" height="1400"><rect x="1619.4" y="546.3" width="245.2" height="367.7" fill="none" stroke="#ffffff" stroke-width="4" stroke-dasharray="8 12" stroke-linecap="round" style="filter:drop-shadow(0 0 1.2px rgba(60,50,30,0.45))"/></svg>
<div class="b" style="left:1741px;top:915px;width:2px;height:42px;background:#a9a493;border-radius:0px;"></div>
<div class="b" style="left:1718px;top:956px;width:48px;height:48px;background:#fff;border-radius:24px;box-shadow:0 0 0 1px #d9d3c2, 0 2px 10px rgba(0,0,0,0.08);"></div>
<svg class="b" style="left:1728px;top:966px;" width="28" height="28" viewBox="0 0 28 28" fill="none"><g stroke="#0f1115" stroke-width="2.6" stroke-linecap="round" stroke-linejoin="round"><path d="M5 14 Q5 5.5 13.5 5.2 Q18.5 5 21.5 8.5"/><path d="M22.5 3.5 L22 9.2 L16.5 9"/><path d="M23 14 Q23 22.5 14.5 22.8 Q9.5 23 6.5 19.5"/><path d="M5.5 24.5 L6 18.8 L11.5 19"/></g></svg>
<div class="b" style="left:1607px;top:534px;width:24px;height:24px;background:linear-gradient(#fff,#f3f4f5);border-radius:12px;border:2px solid #59636b;"></div>
<div class="b" style="left:1853px;top:534px;width:24px;height:24px;background:linear-gradient(#fff,#f3f4f5);border-radius:12px;border:2px solid #59636b;"></div>
<div class="b" style="left:1607px;top:902px;width:24px;height:24px;background:linear-gradient(#fff,#f3f4f5);border-radius:12px;border:2px solid #59636b;"></div>
<div class="b" style="left:1853px;top:902px;width:24px;height:24px;background:linear-gradient(#fff,#f3f4f5);border-radius:12px;border:2px solid #59636b;"></div>
<div class="b" style="left:1530px;top:455px;width:425px;height:71px;background:#fcf9f2;border-radius:18px;border:2px solid #d8d8d4;box-shadow:0 6px 16px rgba(80,60,20,0.12);"></div>
<div class="t" style="top:477.99px;font-size:26px;line-height:26px;color:#0f1115;font-weight:400;font-family:'Liberation Sans', sans-serif;left:1564px;transform:scaleX(1.09);transform-origin:left center;-webkit-text-stroke:0.3px #0f1115;">Group</div>
<svg class="b" style="left:1686px;top:474px;" width="36" height="34" viewBox="0 0 36 34" fill="none"><g fill="#0f1115"><rect x="3" y="3" width="3" height="26.5"/></g><rect x="10.5" y="8.5" width="18" height="12.5" rx="3" stroke="#0f1115" stroke-width="3.2" fill="none"/></svg>
<svg class="b" style="left:1732px;top:484px;" width="20" height="14" viewBox="0 0 20 14" fill="none"><path d="M3 3 L9 9 L15 3" stroke="#a9b0b6" stroke-width="2.2" stroke-linecap="round" stroke-linejoin="round" fill="none"/></svg>
<div class="b" style="left:1784px;top:475px;width:2px;height:30px;background:#d5d6d6;border-radius:0px;"></div>
<svg class="b" style="left:1816px;top:474px;" width="36" height="34" viewBox="0 0 36 34" fill="none"><g stroke="#0f1115" stroke-width="3.2" fill="none" stroke-linejoin="round" stroke-linecap="round"><rect x="3.5" y="9.5" width="21" height="21" rx="4"/><path d="M10 3.5 L24 3.5 Q31 3.5 31 10.5 L31 24"/><path d="M14 15 L14 25 M9 20 L19 20"/></g></svg>
<div class="b" style="left:1891.5px;top:485.5px;width:7px;height:7px;background:#0f1115;border-radius:3.5px;"></div>
<div class="b" style="left:1902.5px;top:485.5px;width:7px;height:7px;background:#0f1115;border-radius:3.5px;"></div>
<div class="b" style="left:1913.5px;top:485.5px;width:7px;height:7px;background:#0f1115;border-radius:3.5px;"></div>
<div class="b" style="left:2006px;top:156px;width:536px;height:1182px;background:linear-gradient(125deg,#fbf8f1 0%,#fcfaf5 35%,#fefefd 65%,#ffffff 100%);border-radius:34px;box-shadow:0 8px 40px rgba(30,40,60,0.10), 0 0 0 1px rgba(0,0,0,0.02);overflow:hidden;"></div>
<div class="t" style="top:189.60px;font-size:30px;line-height:30px;color:#0f1115;font-weight:700;font-family:'Liberation Sans', sans-serif;left:2039px;">Basic</div>
<svg class="b" style="left:2458px;top:188px;" width="32" height="32" viewBox="0 0 32 32" fill="none"><path d="M4 4 L28 28 M28 4 L4 28" stroke="#7b838b" stroke-width="2.8" stroke-linecap="round"/></svg>
<div class="b" style="left:2038px;top:252px;width:296px;height:64px;background:#eef1f4;border-radius:18px;"></div>
<div class="t" style="top:270.99px;font-size:26px;line-height:26px;color:#15171b;font-weight:400;font-family:'Liberation Sans', sans-serif;left:2065px;transform:scaleX(1.085);transform-origin:left center;">IBMPlexSans-Bol</div>
<svg class="b" style="left:2284px;top:276px;" width="24" height="16" viewBox="0 0 24 16" fill="none"><path d="M3 3 L11 11 L19 3" stroke="#6b7279" stroke-width="2.6" stroke-linecap="round" stroke-linejoin="round" fill="none"/></svg>
<div class="b" style="left:2350px;top:252px;width:160px;height:64px;background:#eef1f4;border-radius:18px;"></div>
<div class="t" style="top:270.99px;font-size:26px;line-height:26px;color:#15171b;font-weight:400;font-family:'Liberation Sans', sans-serif;left:2377px;transform:scaleX(1.0);transform-origin:left center;">23.01</div>
<svg class="b" style="left:2459px;top:276px;" width="26" height="16" viewBox="0 0 26 16" fill="none"><path d="M3 3 L12 12 L21 3" stroke="#3a3f45" stroke-width="2.6" stroke-linecap="round" stroke-linejoin="round" fill="none"/></svg>
<div class="b" style="left:2140px;top:332px;width:64px;height:64px;background:#d7f0f3;border-radius:14px;"></div>
<svg class="b" style="left:2050px;top:342px;" width="40" height="32" viewBox="0 0 40 32" fill="none"><path d="M7 28 L14.5 6 L21.5 6 L29 28" stroke="#0f1115" stroke-width="4" fill="none" stroke-linejoin="miter"/><path d="M10.5 20.5 L25.5 20.5" stroke="#0f1115" stroke-width="3.6"/></svg>
<div class="b" style="left:2054px;top:379px;width:32px;height:7px;background:#3d3f7a;border-radius:3.5px;"></div>
<div class="t" style="top:345.83px;font-size:38px;line-height:38px;color:#0f1115;font-weight:700;font-family:'Liberation Sans', sans-serif;left:1572px;width:1200px;text-align:center;">B</div>
<svg class="b" style="left:2258px;top:346px;" width="32" height="36" viewBox="0 0 32 36" fill="none"><g fill="#0f1115"><rect x="10" y="4" width="16" height="3.4"/><rect x="5" y="28.4" width="16" height="3.4"/><path d="M16.5 7 L20 7 L14.5 28.8 L11 28.8 Z"/></g></svg>
<svg class="b" style="left:2360px;top:340px;" width="32" height="42" viewBox="0 0 32 42" fill="none"><g stroke="#0f1115" stroke-width="3.2" fill="none"><path d="M7.2 9 L7.2 22 Q7.2 31 16 31 Q24.8 31 24.8 22 L24.8 9"/></g><rect x="3" y="36" width="26" height="3" fill="#0f1115"/></svg>
<div class="t" style="top:345.83px;font-size:38px;line-height:38px;color:#0f1115;font-weight:400;font-family:'Liberation Sans', sans-serif;left:2459px;">A</div>
<div class="t" style="top:355.99px;font-size:26px;line-height:26px;color:#0f1115;font-weight:400;font-family:'Liberation Sans', sans-serif;left:2483px;">a</div>
<div class="b" style="left:2038px;top:428px;width:472px;height:3px;background:#e9ecee;border-radius:0px;"></div>
<div class="t" style="top:466.99px;font-size:26px;line-height:26px;color:#0f1115;font-weight:400;font-family:'Liberation Sans', sans-serif;left:2039px;transform:scaleX(1.135);transform-origin:left center;-webkit-text-stroke:0.7px #0f1115;">Alignment</div>
<div class="b" style="left:2199px;top:520px;width:149px;height:63px;background:linear-gradient(90deg,#d6f1f4,#d9f1f7);border-radius:16px;"></div>
<svg class="b" style="left:2098px;top:540px;" width="30" height="26" viewBox="0 0 30 26" fill="none"><g fill="#0f1115"><rect x="0" y="0" width="30" height="3.3"/><rect x="0" y="11" width="18" height="3.3"/><rect x="0" y="22" width="22" height="3.3"/></g></svg>
<svg class="b" style="left:2259px;top:540px;" width="30" height="26" viewBox="0 0 30 26" fill="none"><g fill="#0f1115"><rect x="0" y="0" width="30" height="3.3"/><rect x="6" y="11" width="18" height="3.3"/><rect x="4" y="22" width="22" height="3.3"/></g></svg>
<svg class="b" style="left:2420px;top:540px;" width="30" height="26" viewBox="0 0 30 26" fill="none"><g fill="#0f1115"><rect x="0" y="0" width="30" height="3.3"/><rect x="12" y="11" width="18" height="3.3"/><rect x="8" y="22" width="22" height="3.3"/></g></svg>
<div class="b" style="left:2038px;top:617px;width:472px;height:3px;background:#e9ecee;border-radius:0px;"></div>
<div class="t" style="top:659.99px;font-size:26px;line-height:26px;color:#0f1115;font-weight:400;font-family:'Liberation Sans', sans-serif;left:2039px;transform:scaleX(1.1);transform-origin:left center;-webkit-text-stroke:0.7px #0f1115;">Spacing</div>
<svg class="b" style="left:2477px;top:659px;" width="26" height="26" viewBox="0 0 26 26" fill="none"><g stroke="#c7ced5" stroke-width="2.4" stroke-linecap="round" stroke-linejoin="round" fill="none"><path d="M6 6.5 Q9 3.5 13 3.5 Q22.5 3.5 22.5 13 Q22.5 22.5 13 22.5 Q3.5 22.5 3.5 13"/><path d="M5 2.5 L5.5 7.5 L10.5 7"/></g></svg>
<div class="t" style="top:724.99px;font-size:26px;line-height:26px;color:#979ea6;font-weight:400;font-family:'Liberation Sans', sans-serif;left:2038px;transform:scaleX(1.1);transform-origin:left center;">Line spacing</div>
<div class="b" style="left:2038px;top:794px;width:292px;height:4px;background:#cdd3d9;border-radius:2px;"></div>
<div class="b" style="left:2038px;top:794px;width:26px;height:4px;background:#69727b;border-radius:2px;"></div>
<div class="b" style="left:2051px;top:782px;width:28px;height:28px;background:#fff;border-radius:14px;border:2px solid #7a848d;box-shadow:0 2px 6px rgba(0,0,0,0.15);"></div>
<div class="b" style="left:2354px;top:764px;width:156px;height:64px;background:#eef1f4;border-radius:18px;"></div>
<div class="t" style="top:783.99px;font-size:26px;line-height:26px;color:#0f1115;font-weight:400;font-family:'Liberation Sans', sans-serif;left:2381px;">0</div>
<div class="t" style="top:851.99px;font-size:26px;line-height:26px;color:#979ea6;font-weight:400;font-family:'Liberation Sans', sans-serif;left:2038px;transform:scaleX(1.12);transform-origin:left center;">Word spacing</div>
<div class="b" style="left:2038px;top:922px;width:292px;height:4px;background:#cdd3d9;border-radius:2px;"></div>
<div class="b" style="left:2038px;top:922px;width:26px;height:4px;background:#69727b;border-radius:2px;"></div>
<div class="b" style="left:2051px;top:910px;width:28px;height:28px;background:#fff;border-radius:14px;border:2px solid #7a848d;box-shadow:0 2px 6px rgba(0,0,0,0.15);"></div>
<div class="b" style="left:2354px;top:893px;width:156px;height:62px;background:#eef1f4;border-radius:18px;"></div>
<div class="t" style="top:911.99px;font-size:26px;line-height:26px;color:#0f1115;font-weight:400;font-family:'Liberation Sans', sans-serif;left:2381px;">0</div>
<div class="b" style="left:2038px;top:989px;width:472px;height:3px;background:#e9ecee;border-radius:0px;"></div>
<div class="t" style="top:1031.99px;font-size:26px;line-height:26px;color:#0f1115;font-weight:400;font-family:'Liberation Sans', sans-serif;left:2039px;transform:scaleX(1.1);transform-origin:left center;-webkit-text-stroke:0.7px #0f1115;">Style</div>
<svg class="b" style="left:2477px;top:1031px;" width="26" height="26" viewBox="0 0 26 26" fill="none"><g stroke="#c7ced5" stroke-width="2.4" stroke-linecap="round" stroke-linejoin="round" fill="none"><path d="M6 6.5 Q9 3.5 13 3.5 Q22.5 3.5 22.5 13 Q22.5 22.5 13 22.5 Q3.5 22.5 3.5 13"/><path d="M5 2.5 L5.5 7.5 L10.5 7"/></g></svg>
<div class="t" style="top:1103.99px;font-size:26px;line-height:26px;color:#0f1115;font-weight:400;font-family:'Liberation Sans', sans-serif;left:2038px;transform:scaleX(1.11);transform-origin:left center;-webkit-text-stroke:0.3px #0f1115;">Background</div>
<svg class="b" style="left:2476px;top:1103px;" width="28" height="28" viewBox="0 0 28 28" fill="none"><path d="M14 1 L14 27 M1 14 L27 14" stroke="#0f1115" stroke-width="2.8"/></svg>
<div class="b" style="left:2038px;top:1169px;width:472px;height:3px;background:#e9ecee;border-radius:0px;"></div>
<div class="t" style="top:1211.99px;font-size:26px;line-height:26px;color:#0f1115;font-weight:400;font-family:'Liberation Sans', sans-serif;left:2038px;transform:scaleX(1.075);transform-origin:left center;-webkit-text-stroke:0.3px #0f1115;">Shadow</div>
<svg class="b" style="left:2476px;top:1211px;" width="28" height="28" viewBox="0 0 28 28" fill="none"><path d="M14 1 L14 27 M1 14 L27 14" stroke="#0f1115" stroke-width="2.8"/></svg>
<div class="b" style="left:2038px;top:1277px;width:472px;height:3px;background:#e9ecee;border-radius:0px;"></div>
<div class="b" style="left:2006px;top:1300px;width:536px;height:38px;overflow:hidden;border-radius:0 0 34px 34px;">
<div class="t" style="top:19.99px;font-size:26px;line-height:26px;color:#0f1115;font-weight:400;font-family:'Liberation Sans', sans-serif;left:32px;transform:scaleX(1.08);transform-origin:left center;-webkit-text-stroke:0.3px #0f1115;">Stroke</div>
<svg class="b" style="left:470px;top:19px" width="28" height="28"><path d="M14 1 L14 27 M1 14 L27 14" stroke="#0f1115" stroke-width="2.8"/></svg>
</div>
<div class="b" style="left:2556px;top:153px;width:112px;height:456px;background:#fcfcfc;border-radius:32px;box-shadow:0 10px 30px rgba(30,40,60,0.10);"></div>
<div class="b" style="left:2564px;top:162px;width:96px;height:103px;background:#e1e5e9;border-radius:24px;"></div>
<svg class="b" style="left:2594px;top:180px;" width="36" height="38" viewBox="0 0 36 38" fill="none"><g stroke="#0f1115" stroke-width="3.4" stroke-linecap="round"><path d="M4 9.5 L4 4 L32 4 L32 9.5"/><path d="M18 4 L18 34"/><path d="M11.5 34 L24.5 34"/></g></svg>
<div class="t" style="top:226.22px;font-size:21px;line-height:21px;color:#0f1115;font-weight:400;font-family:'Liberation Sans', sans-serif;left:2012px;width:1200px;text-align:center;-webkit-text-stroke:0.2px #0f1115;">Basic</div>
<svg class="b" style="left:2593px;top:292px;" width="40" height="40" viewBox="0 0 40 40" fill="none"><g stroke="#4f5760" stroke-width="3.2" fill="none" stroke-linejoin="round" stroke-linecap="round"><path d="M16 31.5 L8.5 31.5 Q4 31.5 4 27 L4 8.5 Q4 4 8.5 4 L27 4 Q31.5 4 31.5 8.5 L31.5 16"/></g><path d="M27.5 19.5 L29.6 24.3 L34.8 24.6 L30.9 28.2 L32.2 33.3 L27.5 30.6 L22.8 33.3 L24.1 28.2 L20.2 24.6 L25.4 24.3 Z" fill="#4f5760"/></svg>
<div class="t" style="top:338.22px;font-size:21px;line-height:21px;color:#4f5760;font-weight:400;font-family:'Liberation Sans', sans-serif;left:2012px;width:1200px;text-align:center;">Presets</div>
<svg class="b" style="left:2596px;top:404px;" width="34" height="36" viewBox="0 0 34 36" fill="none"><path d="M17 3.5 Q7 14.5 7 22 Q7 32 17 32 Q27 32 27 22 Q27 14.5 17 3.5 Z" stroke="#4f5760" stroke-width="3.2" fill="none" stroke-linejoin="round"/><path d="M17 12 Q23 18 23 23 Q23 28 17 28 Z" fill="#a7adb4"/></svg>
<div class="t" style="top:451.22px;font-size:21px;line-height:21px;color:#4f5760;font-weight:400;font-family:'Liberation Sans', sans-serif;left:2012px;width:1200px;text-align:center;">Opacity</div>
<svg class="b" style="left:2594px;top:515px;" width="38" height="38" viewBox="0 0 38 38" fill="none"><rect x="3.5" y="3.5" width="31" height="31" rx="6" stroke="#4f5760" stroke-width="3.2" fill="none" stroke-dasharray="7 5"/><rect x="12.5" y="12.5" width="13" height="13" rx="3" stroke="#4f5760" stroke-width="3" fill="#c2c7cc"/></svg>
<div class="t" style="top:562.22px;font-size:21px;line-height:21px;color:#4f5760;font-weight:400;font-family:'Liberation Sans', sans-serif;left:2012px;width:1200px;text-align:center;">Arrange</div>
<div class="t" style="top:121.30px;font-size:28px;line-height:28px;color:#0f1115;font-weight:700;font-family:'Liberation Sans', sans-serif;left:2719px;transform:scaleX(0.95);transform-origin:left center;">Layers</div>
<div class="b" style="left:2718px;top:176px;width:132px;height:111px;background:#fff;border-radius:14px;border:4px solid #00c6de;"></div>
<div class="b" style="left:2726px;top:184px;width:116px;height:95px;background:transparent;border-radius:8px;background:conic-gradient(#eef1f4 25%,#dde1e5 0 50%,#eef1f4 0 75%,#dde1e5 0) 0 0/32px 32px;"></div>
<div class="t" style="top:221.38px;font-size:22px;line-height:22px;color:#3d3f7a;font-weight:400;font-family:'Liberation Sans', sans-serif;left:2184px;width:1200px;text-align:center;transform:scaleX(1.09);transform-origin:center center;">Body text</div>
<div class="b" style="left:2718px;top:305px;width:132px;height:111px;background:#fff;border-radius:14px;border:4px solid #00c6de;"></div>
<div class="b" style="left:2726px;top:313px;width:116px;height:95px;background:transparent;border-radius:8px;background:conic-gradient(#eef1f4 25%,#dde1e5 0 50%,#eef1f4 0 75%,#dde1e5 0) 0 0/32px 32px;"></div>
<div class="t" style="top:345.45px;font-size:29px;line-height:29px;color:#3d3f7a;font-weight:700;font-family:'Liberation Sans', sans-serif;left:2184px;width:1200px;text-align:center;transform:scaleX(0.88);transform-origin:center center;">Subtitle</div>
<div class="b" style="left:2718px;top:432px;width:132px;height:111px;background:#fff;border-radius:14px;border:4px solid #00c6de;"></div>
<div class="b" style="left:2726px;top:440px;width:116px;height:95px;background:transparent;border-radius:8px;background:conic-gradient(#eef1f4 25%,#dde1e5 0 50%,#eef1f4 0 75%,#dde1e5 0) 0 0/32px 32px;"></div>
<div class="t" style="top:464.45px;font-size:42px;line-height:42px;color:#3d3f7a;font-weight:700;font-family:'Liberation Sans', sans-serif;left:2184px;width:1200px;text-align:center;transform:scaleX(1.1);transform-origin:center center;">Title</div>
<div class="b" style="left:2718px;top:560px;width:132px;height:112px;background:#eef1f4;border-radius:14px;"></div>
<div class="b" style="left:2726px;top:568px;width:116px;height:96px;background:#ebd6a6;border-radius:10px;"></div>
<div class="b" style="left:2802px;top:624px;width:40px;height:40px;background:#8c7f62;border-radius:10px;"></div>
<svg class="b" style="left:2806px;top:628px;" width="32" height="32" viewBox="0 0 32 32" fill="none"><rect x="5.5" y="5.5" width="21" height="21" rx="3" stroke="#fff" stroke-width="3" fill="none"/><path d="M8 21 L21 8 M8 15 L15 8 M14 21 L21 14" stroke="#cfc8b6" stroke-width="2.2"/></svg>
<div class="b" style="left:800px;top:1352px;width:2080px;height:48px;background:#fff;border-radius:0px;border-top:2px solid #e8ebee;"></div>
<svg class="b" style="left:830px;top:1382px;" width="40" height="20" viewBox="0 0 40 20" fill="none"><g stroke="#0f1115" stroke-width="3.2" fill="none"><rect x="3.5" y="9.5" width="21" height="21" rx="4"/><path d="M10 3.5 L24 3.5 Q31 3.5 31 10.5 L31 24"/></g></svg>
<svg class="b" style="left:908px;top:1382px;" width="40" height="20" viewBox="0 0 40 20" fill="none"><g stroke="#c5ccd3" stroke-width="3.2" fill="none" stroke-linecap="round"><path d="M4 9 L36 9"/><path d="M13 9 Q13 3 20 3 Q27 3 27 9"/><path d="M8 13 L8 20"/><path d="M32 13 L32 20"/></g></svg>
<div class="b" style="left:976px;top:1384px;width:2px;height:16px;background:#d5d9dd;border-radius:0px;"></div>
<svg class="b" style="left:1012px;top:1383px;" width="36" height="20" viewBox="0 0 36 20" fill="none"><rect x="3" y="3" width="30" height="30" rx="6" stroke="#0f1115" stroke-width="3.4" fill="none"/></svg>
<div class="t" style="top:1385.30px;font-size:28px;line-height:28px;color:#0f1115;font-weight:700;font-family:'Liberation Sans', sans-serif;left:1061px;transform:scaleX(1.0);transform-origin:left center;">Add page</div>
<div class="b" style="left:1880px;top:1354px;width:900px;height:46px;background:radial-gradient(ellipse 50% 100% at 50% 0%, rgba(20,30,40,0.045), rgba(20,30,40,0));border-radius:0px;"></div>
<svg class="b" style="left:2568px;top:1386px;" width="24" height="16" viewBox="0 0 24 16" fill="none"><path d="M15 2 L5 14" stroke="#c5ccd3" stroke-width="3" stroke-linecap="round"/></svg>
<div class="t" style="top:1384.99px;font-size:26px;line-height:26px;color:#0f1115;font-weight:700;font-family:'Liberation Sans', sans-serif;left:2053px;width:1200px;text-align:center;">1/1</div>
<svg class="b" style="left:2716px;top:1386px;" width="24" height="16" viewBox="0 0 24 16" fill="none"><path d="M5 2 L15 14" stroke="#c5ccd3" stroke-width="3" stroke-linecap="round"/></svg>
<div class="b" style="left:2782px;top:1384px;width:2px;height:16px;background:#d5d9dd;border-radius:0px;"></div>
<svg class="b" style="left:2812px;top:1384px;" width="40" height="20" viewBox="0 0 40 20" fill="none"><g stroke="#0f1115" stroke-width="3.2" fill="none" stroke-linecap="round" stroke-linejoin="round"><path d="M14 8 L19.5 3 L25 8"/><rect x="5" y="13" width="29" height="16" rx="5"/></g></svg>
</body></html>
